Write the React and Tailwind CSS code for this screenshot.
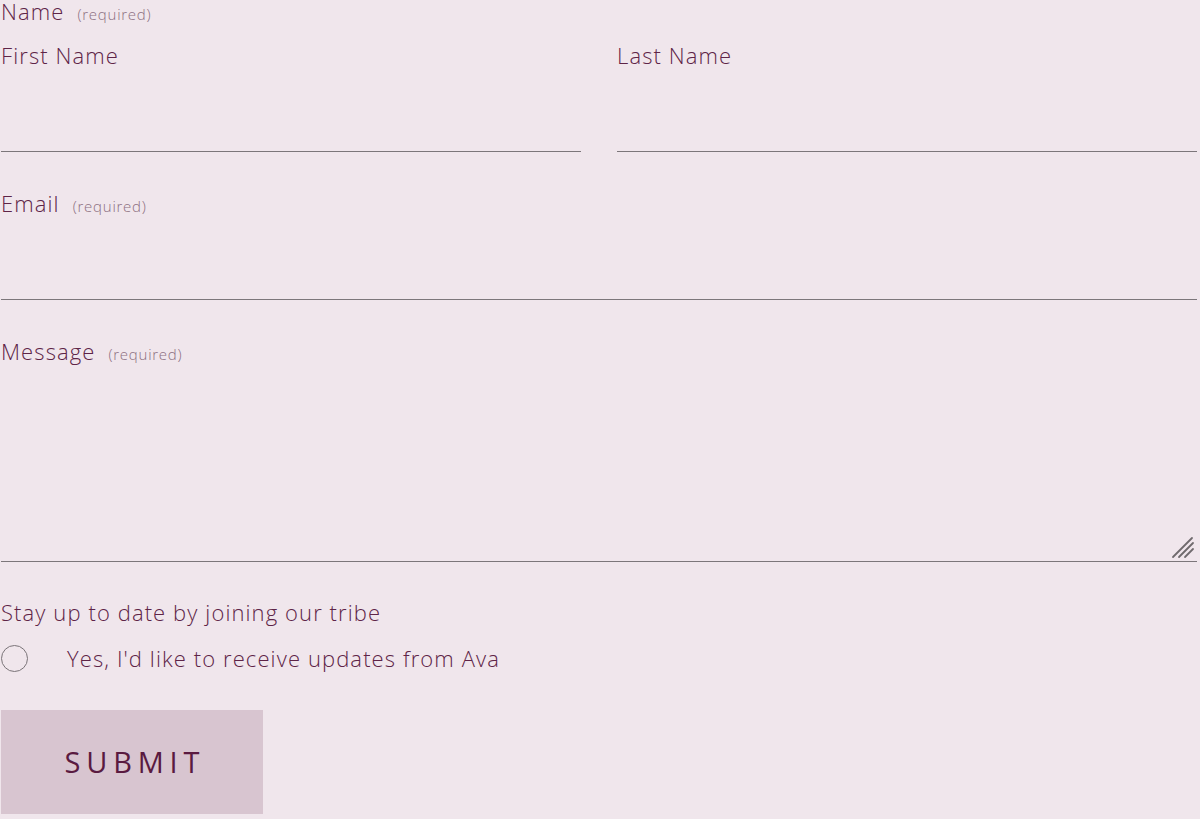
export default function App() {
  const font = { fontFamily: '"Open Sans", "Noto Sans", sans-serif' };
  const label = "text-[22px] tracking-[0.05em]";
  const req = "ml-[13px] text-[15px] tracking-[0.05em] text-[#8c6f81]";
  const line = "border-b-[1.5px] border-[#7c767a]";
  return (
    <div className="min-h-[819px] w-full bg-[#f0e6ec] text-[#5e2447] font-light pt-px" style={font}>
      <div className="w-[1196px] ml-[1px]">
        <div className="flex items-baseline h-[23px] leading-[20px]">
          <span className={label}>Name</span>
          <span className={req}>(required)</span>
        </div>
        <div className="grid grid-cols-2 gap-x-9 mt-5">
          <div>
            <div className={`${label} leading-[22px] h-6`}>First Name</div>
            <div className={`h-[84px] ${line}`} />
          </div>
          <div>
            <div className={`${label} leading-[22px] h-6`}>Last Name</div>
            <div className={`h-[84px] ${line}`} />
          </div>
        </div>
        <div className="mt-10">
          <div className="flex items-baseline h-6 leading-[22px]">
            <span className={label}>Email</span>
            <span className={req}>(required)</span>
          </div>
          <div className={`h-[84px] ${line}`} />
        </div>
        <div className="mt-10">
          <div className="flex items-baseline h-6 leading-[22px]">
            <span className={label}>Message</span>
            <span className={req}>(required)</span>
          </div>
          <div className={`relative h-[198px] ${line}`}>
            <svg className="absolute right-[2px] bottom-[2px]" width="24" height="24" viewBox="0 0 24 24">
              <g stroke="#6f6a6d" strokeWidth="1.8" strokeLinecap="round">
                <line x1="2" y1="22" x2="21" y2="3" />
                <line x1="8" y1="22" x2="22" y2="8" />
                <line x1="14" y1="22" x2="22" y2="14" />
              </g>
            </svg>
          </div>
        </div>
        <div className={`mt-[39px] ${label} leading-[22px] h-6`}>Stay up to date by joining our tribe</div>
        <div className="mt-[19px] flex items-center h-7">
          <span className="w-[27px] h-[27px] rounded-full border-[1.5px] border-[#7a7478] shrink-0" />
          <span className={`ml-[39px] ${label}`}>Yes, I'd like to receive updates from Ava</span>
        </div>
        <div className="mt-[38px] w-[262px] h-[104px] bg-[#d8c5d0] flex items-center justify-center">
          <span className="text-[29px] tracking-[0.2em] text-[#5a1a40] font-normal pl-[0.2em]">SUBMIT</span>
        </div>
      </div>
    </div>
  );
}
